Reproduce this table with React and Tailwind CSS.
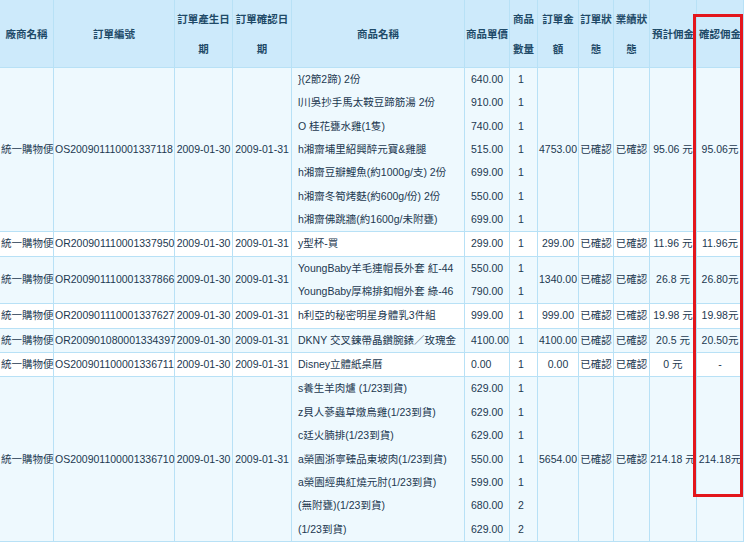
const ORDERS = [
  {
    id: "OS200901110001337118",
    items: [
      ["}(2節2蹄) 2份", "640.00", "1"],
      ["l川吳抄手馬太鞍豆蹄筋湯 2份", "910.00", "1"],
      ["O 桂花甕水雞(1隻)", "740.00", "1"],
      ["h湘齋埔里紹興醉元寶&雞腿", "515.00", "1"],
      ["h湘齋豆瓣鯉魚(約1000g/支) 2份", "699.00", "1"],
      ["h湘齋冬筍烤麩(約600g/份) 2份", "550.00", "1"],
      ["h湘齋佛跳牆(約1600g/未附甕)", "699.00", "1"]
    ],
    amount: "4753.00",
    estimate: "95.06 元",
    confirmed: "95.06元"
  },
  {
    id: "OR200901110001337950",
    items: [["y型杯-買", "299.00", "1"]],
    amount: "299.00",
    estimate: "11.96 元",
    confirmed: "11.96元"
  },
  {
    id: "OR200901110001337866",
    items: [
      ["YoungBaby羊毛連帽長外套 紅-44", "550.00", "1"],
      ["YoungBaby厚棉排釦帽外套 綠-46", "790.00", "1"]
    ],
    amount: "1340.00",
    estimate: "26.8 元",
    confirmed: "26.80元"
  },
  {
    id: "OR200901110001337627",
    items: [["h利亞的秘密明星身體乳3件組", "999.00", "1"]],
    amount: "999.00",
    estimate: "19.98 元",
    confirmed: "19.98元"
  },
  {
    id: "OR200901080001334397",
    items: [["DKNY 交叉鍊帶晶鑽腕錶／玫瑰金", "4100.00", "1"]],
    amount: "4100.00",
    estimate: "20.5 元",
    confirmed: "20.50元"
  },
  {
    id: "OS200901100001336711",
    items: [["Disney立體紙桌曆", "0.00", "1"]],
    amount: "0.00",
    estimate: "0 元",
    confirmed: "-"
  },
  {
    id: "OS200901100001336710",
    items: [
      ["s養生羊肉爐 (1/23到貨)", "629.00", "1"],
      ["z貝人蔘蟲草燉烏雞(1/23到貨)", "629.00", "1"],
      ["c廷火腩排(1/23到貨)", "629.00", "1"],
      ["a榮園浙寧臻品東坡肉(1/23到貨)", "550.00", "1"],
      ["a榮園經典紅燒元肘(1/23到貨)", "599.00", "1"],
      ["(無附甕)(1/23到貨)", "680.00", "2"],
      ["(1/23到貨)", "629.00", "2"]
    ],
    amount: "5654.00",
    estimate: "214.18 元",
    confirmed: "214.18元"
  }
];

const WIDTHS = [54, 121, 58, 59, 173, 45, 28, 41, 35, 36, 47, 47];

const HEADERS = [
  ["廠商名稱"],
  ["訂單編號"],
  ["訂單產生日", "期"],
  ["訂單確認日", "期"],
  ["商品名稱"],
  ["商品單價"],
  ["商品", "數量"],
  ["訂單金", "額"],
  ["訂單狀", "態"],
  ["業績狀", "態"],
  ["預計佣金"],
  ["確認佣金"]
];

const cell = "border border-[#b8e1f6] align-middle whitespace-nowrap overflow-visible";

function Lines({ values }) {
  return values.map((value, index) => <div key={index}>{value}</div>);
}

export default function App() {
  return (
    <div
      className="relative w-[744px] h-[544px] overflow-hidden bg-white text-[10.5px] leading-[23.35px] text-[#1c3850]"
      style={{ fontFamily: '"Liberation Sans", "Noto Sans CJK TC", sans-serif' }}
    >
      <table className="w-[744px] table-fixed border-collapse -mt-px -ml-px">
        <colgroup>
          {WIDTHS.map((width, index) => (
            <col key={index} style={{ width }} />
          ))}
        </colgroup>
        <thead>
          <tr className="bg-[#cdeafb]">
            {HEADERS.map((lines, index) => (
              <th
                className={`${cell} py-[3.5px] text-center font-bold leading-[30px] text-[#1f4a68]`}
                key={index}
              >
                {lines.map((line, lineIndex) => (
                  <div key={lineIndex}>{line}</div>
                ))}
              </th>
            ))}
          </tr>
        </thead>
        <tbody>
          {ORDERS.map((order, index) => (
            <tr className={index % 2 === 0 ? "bg-[#eef9fe]" : "bg-white"} key={order.id}>
              <td className={`${cell} pl-[1px]`}>統一購物便</td>
              <td className={`${cell} pl-[1px]`}>{order.id}</td>
              <td className={`${cell} text-center`}>2009-01-30</td>
              <td className={`${cell} text-center`}>2009-01-31</td>
              <td className={`${cell} pl-[6px]`}>
                <Lines values={order.items.map((item) => item[0])} />
              </td>
              <td className={`${cell} pl-[6px]`}>
                <Lines values={order.items.map((item) => item[1])} />
              </td>
              <td className={`${cell} pl-[8px]`}>
                <Lines values={order.items.map((item) => item[2])} />
              </td>
              <td className={`${cell} text-center`}>{order.amount}</td>
              <td className={`${cell} text-center`}>已確認</td>
              <td className={`${cell} text-center`}>已確認</td>
              <td className={`${cell} text-center`}>{order.estimate}</td>
              <td className={`${cell} text-center`}>{order.confirmed}</td>
            </tr>
          ))}
        </tbody>
      </table>

      <div className="pointer-events-none absolute left-[693px] top-[14px] h-[483px] w-[50px] border-[3px] border-[#e3161c]" />
    </div>
  );
}
